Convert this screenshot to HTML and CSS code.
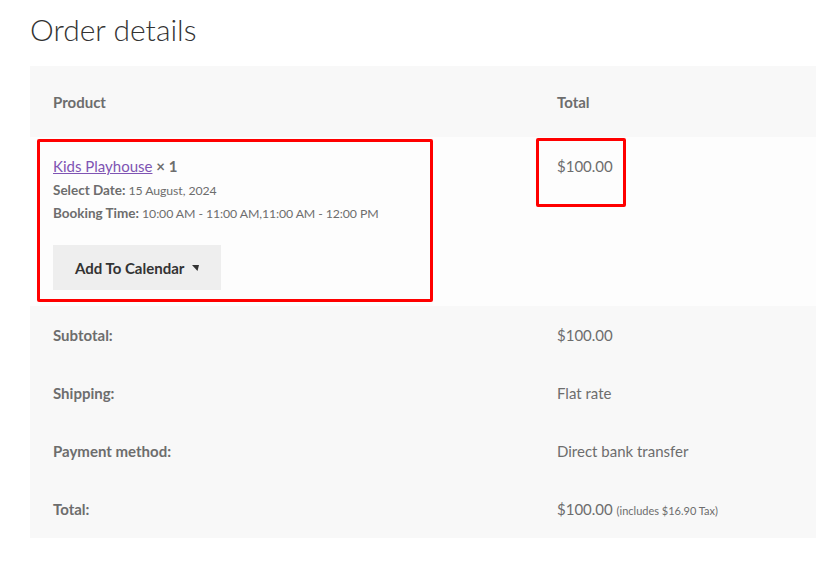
FILE: index.html
```html
<!DOCTYPE html>
<html lang="en">
<head>
<meta charset="utf-8">
<title>Order details</title>
<link rel="stylesheet" href="styles.css">
</head>
<body>
<section class="order">
  <h2 class="order-title">Order details</h2>
  <div class="table-wrap">
    <table class="order-table">
      <thead>
        <tr>
          <th class="col-product">Product</th>
          <th class="col-total">Total</th>
        </tr>
      </thead>
      <tbody>
        <tr class="item-row">
          <td class="col-product">
            <div class="item-name"><a href="#" class="item-link">Kids Playhouse</a> <strong class="qty">× 1</strong></div>
            <ul class="item-meta">
              <li><strong>Select Date:</strong> 15 August, 2024</li>
              <li><strong>Booking Time:</strong> 10:00 AM - 11:00 AM,11:00 AM - 12:00 PM</li>
            </ul>
            <button class="cal-btn" type="button">Add To Calendar <svg class="caret" width="7" height="6" viewBox="0 0 7 6"><polygon points="0,0 7,0 5.5,6" fill="#333"/></svg></button>
          </td>
          <td class="col-total">$100.00</td>
        </tr>
      </tbody>
      <tfoot>
        <tr><th>Subtotal:</th><td>$100.00</td></tr>
        <tr><th>Shipping:</th><td>Flat rate</td></tr>
        <tr><th>Payment method:</th><td>Direct bank transfer</td></tr>
        <tr><th>Total:</th><td>$100.00 <small class="tax">(includes $16.90 Tax)</small></td></tr>
      </tfoot>
    </table>
    <div class="mark mark-left"></div>
    <div class="mark mark-right"></div>
  </div>
</section>
</body>
</html>
```

FILE: styles.css
```css
* { box-sizing: border-box; }
body {
  margin: 0;
  background: #ffffff;
  font-family: "Lato", "Open Sans", sans-serif;
  font-size: 15px;
  color: #6d6d6d;
}
.order {
  padding: 0 13px 0 30px;
}
.order-title {
  margin: 0;
  padding-top: 7px;
  font-size: 30px;
  font-weight: 300;
  line-height: 44px;
  color: #333333;
  height: 66px;
}
.table-wrap {
  position: relative;
  width: 786px;
}
.order-table {
  width: 786px;
  border-collapse: collapse;
  border-spacing: 0;
  table-layout: fixed;
}
.order-table th,
.order-table td {
  padding: 16px 23px;
  line-height: 26px;
  text-align: left;
  vertical-align: top;
}
.order-table th { font-weight: 700; }
.order-table td { font-weight: 400; }
.col-product { width: 504px; }
.order-table thead th {
  background: #f8f8f8;
  padding: 22.5px 23px;
  vertical-align: middle;
}
.item-row td { background: #fdfdfd; }
.order-table tfoot tr { height: 58px; }
.order-table tfoot th,
.order-table tfoot td { background: #f8f8f8; height: 58px; }
.item-link { color: #7f54b3; text-decoration: underline; }
.qty { font-weight: 700; }
.item-meta {
  list-style: none;
  margin: 0;
  padding: 0;
  font-size: 12.3px;
  letter-spacing: -0.1px;
  line-height: 23px;
}
.item-meta strong { font-weight: 700; font-size: 13.5px; letter-spacing: 0; }
.cal-btn {
  display: inline-flex;
  align-items: center;
  gap: 8px;
  margin-top: 20px;
  height: 45px;
  padding: 0 22px;
  border: 0;
  border-radius: 0;
  background: #eeeeee;
  color: #333333;
  font-family: inherit;
  font-size: 15px;
  font-weight: 700;
}
.caret { display: block; margin-top: 1px; }
.tax { font-size: 11px; line-height: 1; }
.mark {
  position: absolute;
  border: 3px solid #ff0000;
  border-radius: 2px;
}
.mark-left { left: 7px; top: 73px; width: 396px; height: 163px; }
.mark-right { left: 506px; top: 72px; width: 90px; height: 69px; }
```
